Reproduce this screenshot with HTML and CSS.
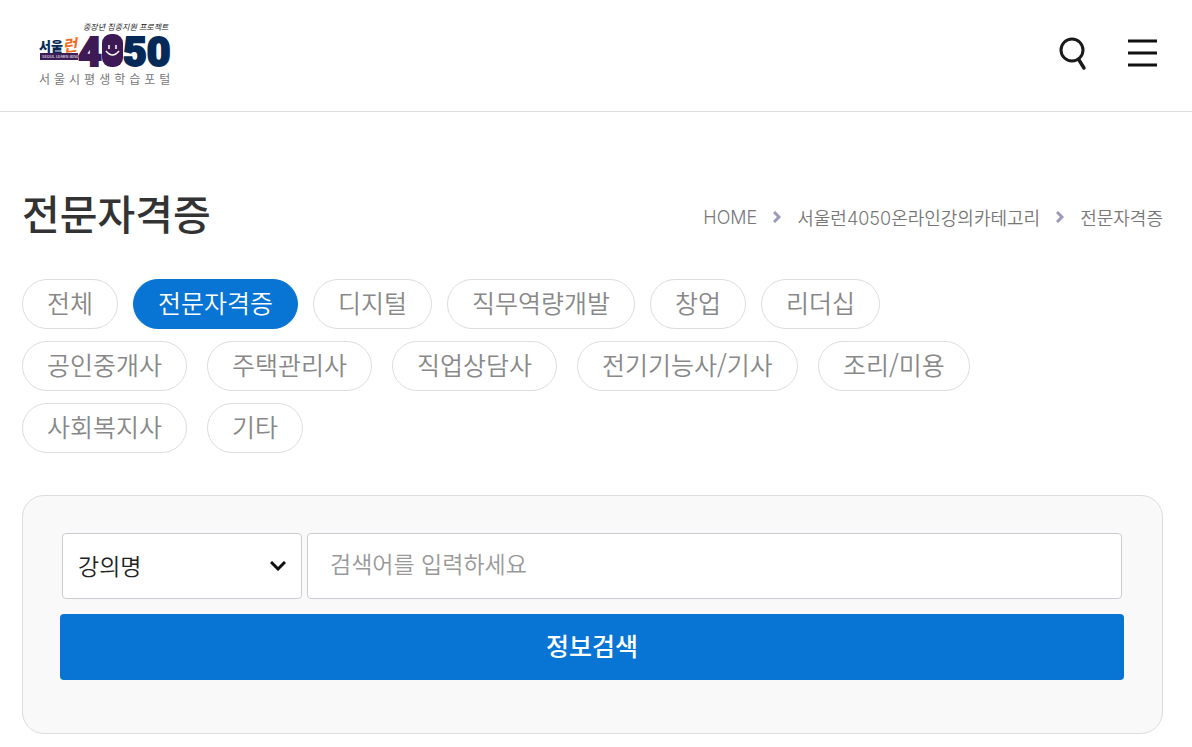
FILE: index.html
```html
<!DOCTYPE html>
<html lang="ko">
<head>
    <meta charset="UTF-8">
    <meta name="viewport" content="width=device-width, initial-scale=1.0">
    <title>전문자격증 - 서울시평생학습포털</title>
    <link rel="stylesheet" href="styles.css">
</head>
<body>
    <header class="header">
        <a class="logo" href="#" aria-label="서울시평생학습포털">
            <svg width="136" height="72" viewBox="0 0 136 72">
                <text class="logo-script" x="45" y="12">중장년 집중지원 프로젝트</text>
                <text class="logo-seoul" x="1" y="33">서울</text>
                <text class="logo-run" x="25" y="34" transform="rotate(-6 25 34)">런</text>
                <rect x="2" y="35" width="38" height="7" fill="#3d1f57"/>
                <text class="logo-tiny" x="4" y="40">SEOUL LEARN 4050</text>
                <text class="logo-num purple" x="40" y="48">4</text>
                <rect x="64" y="16" width="21" height="33" rx="9" fill="#3d1a55"/>
                <path d="M71 27v4M78 27v4M68 33q6.500 8 13 0" fill="none" stroke="#fff" stroke-width="1.500"/>
                <text class="logo-num navy" x="85" y="48">50</text>
                <text class="logo-name" x="1" y="66">서울시평생학습포털</text>
            </svg>
        </a>
        <div class="header-buttons">
            <button class="icon-button" type="button" aria-label="검색">
                <svg width="30" height="34" viewBox="0 0 30 34" fill="none" stroke="#1a1a1a" stroke-linecap="round">
                    <circle cx="14" cy="13" r="11" stroke-width="3"/>
                    <path d="M21 23l5 8" stroke-width="3.500"/>
                </svg>
            </button>
            <button class="icon-button" type="button" aria-label="전체메뉴">
                <svg width="30" height="34" viewBox="0 0 30 34" stroke="#111" stroke-width="3">
                    <path d="M1 4h29M1 16h29M1 28h29"/>
                </svg>
            </button>
        </div>
    </header>

    <main class="content">
        <div class="title-row">
            <h1 class="title">전문자격증</h1>
            <nav class="breadcrumb">
                <a href="#">HOME</a>
                <svg width="8" height="12" viewBox="0 0 8 12" fill="none" stroke="#9a9ab8" stroke-width="3"><path d="M1 1l5 5-5 5"/></svg>
                <a href="#">서울런4050온라인강의카테고리</a>
                <svg width="8" height="12" viewBox="0 0 8 12" fill="none" stroke="#9a9ab8" stroke-width="3"><path d="M1 1l5 5-5 5"/></svg>
                <a href="#">전문자격증</a>
            </nav>
        </div>

        <nav class="categories">
            <a class="chip" href="#">전체</a>
            <a class="chip active" href="#">전문자격증</a>
            <a class="chip" href="#">디지털</a>
            <a class="chip" href="#">직무역량개발</a>
            <a class="chip" href="#">창업</a>
            <a class="chip" href="#">리더십</a>
        </nav>
        <nav class="categories sub">
            <a class="chip" href="#">공인중개사</a>
            <a class="chip" href="#">주택관리사</a>
            <a class="chip" href="#">직업상담사</a>
            <a class="chip" href="#">전기기능사/기사</a>
            <a class="chip" href="#">조리/미용</a>
            <a class="chip" href="#">사회복지사</a>
            <a class="chip" href="#">기타</a>
        </nav>

        <form class="search-box">
            <div class="search-fields">
                <select class="search-type" aria-label="검색 구분">
                    <option>강의명</option>
                </select>
                <input class="search-input" type="text" placeholder="검색어를 입력하세요" aria-label="검색어">
            </div>
            <button class="search-button" type="button">정보검색</button>
        </form>
    </main>
</body>
</html>
```
FILE: styles.css
```css
* {
    box-sizing: border-box;
}
body {
    margin: 0;
    background-color: #fff;
    color: #333;
    font-family: "Noto Sans CJK KR", sans-serif;
}
a {
    color: inherit;
    text-decoration: none;
}
button, input, select {
    font-family: inherit;
}

.header {
    display: flex;
    justify-content: space-between;
    align-items: flex-start;
    height: 112px;
    padding: 18px 35px 0 38px;
    border-bottom: 1px solid #ddd;
}
.logo svg {
    display: block;
}
.logo-script {
    font-size: 8px;
    font-style: italic;
    fill: #222;
}
.logo-seoul {
    font-size: 13px;
    font-weight: 900;
    fill: #062a57;
}
.logo-run {
    font-size: 16px;
    font-weight: 700;
    font-style: italic;
    fill: #f26a21;
}
.logo-tiny {
    font-size: 4px;
    fill: #fff;
}
.logo-num {
    font-family: Roboto, sans-serif;
    font-size: 41px;
    font-weight: 900;
    stroke-width: 2px;
}
.purple {
    fill: #3d1a55;
    stroke: #3d1a55;
}
.navy {
    fill: #062a57;
    stroke: #062a57;
}
.logo-name {
    font-size: 12px;
    letter-spacing: 4px;
    fill: #777;
}
.header-buttons {
    display: flex;
    gap: 39px;
    padding-top: 19px;
}
.icon-button {
    padding: 0;
    border: 0;
    background: none;
    cursor: pointer;
}
.icon-button svg {
    display: block;
}

.content {
    padding: 70px 29px 13px 22px;
}
.title-row {
    display: flex;
    justify-content: space-between;
    align-items: center;
    height: 60px;
    margin-bottom: 37px;
}
.title {
    margin: 0;
    font-size: 41px;
    font-weight: 500;
    line-height: 60px;
}
.breadcrumb {
    display: flex;
    align-items: center;
    gap: 16px;
    padding-top: 10px;
    color: #777;
    font-family: Inter, "Noto Sans CJK KR", sans-serif;
    font-size: 18px;
    font-weight: 350;
}

.categories {
    display: flex;
    flex-wrap: wrap;
    gap: 12px 15px;
    margin-bottom: 12px;
}
.categories.sub {
    column-gap: 20px;
    padding-right: 20px;
    margin-bottom: 42px;
}
.chip {
    height: 50px;
    padding: 0 24px;
    border: 1px solid #ddd;
    border-radius: 25px;
    color: #888;
    font-size: 25px;
    font-weight: 350;
    line-height: 45px;
}
.chip.active {
    border-color: #0875d5;
    background-color: #0875d5;
    color: #fff;
}

.search-box {
    padding: 37px 38px 53px 37px;
    border: 1px solid #ddd;
    border-radius: 22px;
    background-color: #f9f9f9;
}
.search-fields {
    display: flex;
    gap: 5px;
    margin-bottom: 15px;
    padding: 0 2px;
}
.search-type, .search-input {
    height: 66px;
    border: 1px solid #c9cdd2;
    border-radius: 4px;
    background-color: #fff;
    font-size: 23px;
    font-weight: 350;
}
.search-type {
    width: 240px;
    padding: 0 15px 2px;
    appearance: none;
    background-image: url("data:image/svg+xml,%3Csvg xmlns='http://www.w3.org/2000/svg' width='16' height='10' fill='none' stroke='%23111' stroke-width='3'%3E%3Cpath d='M1 1l7 7 7-7'/%3E%3C/svg%3E");
    background-repeat: no-repeat;
    background-position: right 15px center;
    color: #222;
}
.search-input {
    flex: 1;
    min-width: 0;
    padding: 0 22px 6px;
}
.search-input::placeholder {
    color: #999;
}
.search-button {
    display: block;
    width: 100%;
    height: 66px;
    padding-bottom: 6px;
    border: 0;
    border-radius: 4px;
    background-color: #0875d5;
    color: #fff;
    font-size: 25px;
    font-weight: 500;
    cursor: pointer;
}
```
